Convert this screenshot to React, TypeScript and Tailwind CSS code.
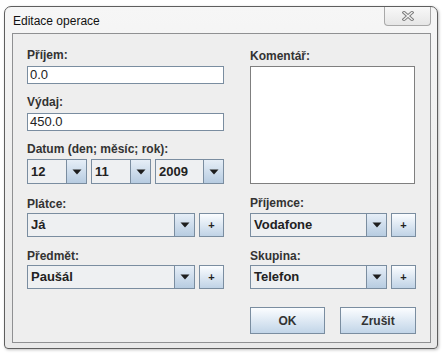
import React from "react";

const font = { fontFamily: '"Liberation Sans", Arial, sans-serif' };

function Arrow() {
  return (
    <svg width="10" height="6" viewBox="0 0 10 6">
      <path d="M0.5 0.5 L9.5 0.5 L5 5.5 Z" fill="#1e1e1e" />
    </svg>
  );
}

function Label({ children, className = "" }: { children: React.ReactNode; className?: string }) {
  return (
    <div className={`h-[14px] leading-[14px] text-[12px] font-bold text-[#333333] ${className}`}>{children}</div>
  );
}

function Combo({ value, w, h = "h-[24px]" }: { value: string; w: string; h?: string }) {
  return (
    <div className={`flex ${w} ${h} border border-[#7a8da0] bg-[#eef0f2]`}>
      <div className="flex-1 flex items-center pl-[3px] text-[13px] font-bold text-[#222222]">{value}</div>
      <div className="w-[20px] h-full border-l border-[#7a8da0] bg-gradient-to-b from-[#e6eef7] to-[#b7cce1] flex items-center justify-center">
        <Arrow />
      </div>
    </div>
  );
}

function Plus() {
  return (
    <div className="w-[25px] h-[24px] border border-[#7a8da0] bg-gradient-to-b from-[#fbfdff] to-[#c0d3e6] flex items-center justify-center text-[11px] font-bold text-[#222222] leading-none">
      +
    </div>
  );
}

function Btn({ children, w }: { children: React.ReactNode; w: string }) {
  return (
    <div className={`${w} h-[27px] border border-[#7a8da0] bg-gradient-to-b from-[#fbfdff] to-[#c2d5e8] flex items-center justify-center text-[12px] font-bold text-[#333333]`}>
      {children}
    </div>
  );
}

export default function App() {
  return (
    <div className="w-[445px] h-[356px] bg-white pt-[6px] pl-[4px]" style={font}>
      <div className="w-[434px] h-[343px] rounded-t-[7px] rounded-b-[4px] border border-[#5e5e5e] bg-gradient-to-b from-[#f6f6f6] via-[#eeeeee] to-[#e9e9e9] shadow-[1px_1px_3px_rgba(0,0,0,0.25)] flex flex-col">
        <div className="h-[26px] flex items-start justify-between">
          <div className="pl-[8px] pt-[7px] text-[12px] leading-[14px] text-[#111111]">Editace operace</div>
          <div className="mr-[6px] w-[47px] h-[19px] border border-t-0 border-[#a8a8a8] rounded-b-[4px] bg-gradient-to-b from-[#f8f8f8] to-[#e6e6e6] flex items-center justify-center">
            <svg width="12" height="10" viewBox="0 0 12 10">
              <path d="M2 1.5 L10 8.5 M10 1.5 L2 8.5" stroke="#7d7d7d" strokeWidth="3.2" strokeLinecap="square" />
              <path d="M2 1.5 L10 8.5 M10 1.5 L2 8.5" stroke="#f2f2f2" strokeWidth="1.3" strokeLinecap="square" />
            </svg>
          </div>
        </div>
        <div className="ml-[7px] w-[419px] h-[310px] border border-[#8f9092] bg-[#eeeeee] flex pl-[14px] pt-[14px]">
          <div className="w-[197px] flex flex-col">
            <Label>Příjem:</Label>
            <div className="mt-[4px] h-[18px] border border-[#7a8da0] bg-white pl-[2px] text-[13px] leading-[16px] text-[#222222]">0.0</div>
            <Label className="mt-[11px]">Výdaj:</Label>
            <div className="mt-[4px] h-[18px] border border-[#7a8da0] bg-white pl-[2px] text-[13px] leading-[16px] text-[#222222]">450.0</div>
            <Label className="mt-[11px]">Datum (den; měsíc; rok):</Label>
            <div className="mt-[3px] flex gap-[4px]">
              <Combo value="12" w="w-[60px]" h="h-[25px]" />
              <Combo value="11" w="w-[60px]" h="h-[25px]" />
              <Combo value="2009" w="w-[69px]" h="h-[25px]" />
            </div>
            <Label className="mt-[13px]">Plátce:</Label>
            <div className="mt-[2px] flex gap-[4px]">
              <Combo value="Já" w="w-[168px]" />
              <Plus />
            </div>
            <Label className="mt-[12px]">Předmět:</Label>
            <div className="mt-[2px] flex gap-[4px]">
              <Combo value="Paušál" w="w-[168px]" />
              <Plus />
            </div>
          </div>
          <div className="ml-[26px] w-[166px] flex flex-col">
            <Label className="mt-[1px]">Komentář:</Label>
            <div className="mt-[3px] w-[165px] h-[118px] border border-[#7f7f7f] bg-white" />
            <Label className="mt-[12px]">Příjemce:</Label>
            <div className="mt-[3px] flex gap-[4px]">
              <Combo value="Vodafone" w="w-[137px]" />
              <Plus />
            </div>
            <Label className="mt-[12px]">Skupina:</Label>
            <div className="mt-[2px] flex gap-[4px]">
              <Combo value="Telefon" w="w-[137px]" />
              <Plus />
            </div>
            <div className="mt-[18px] flex justify-between">
              <Btn w="w-[75px]">OK</Btn>
              <Btn w="w-[76px]">Zrušit</Btn>
            </div>
          </div>
        </div>
      </div>
    </div>
  );
}
